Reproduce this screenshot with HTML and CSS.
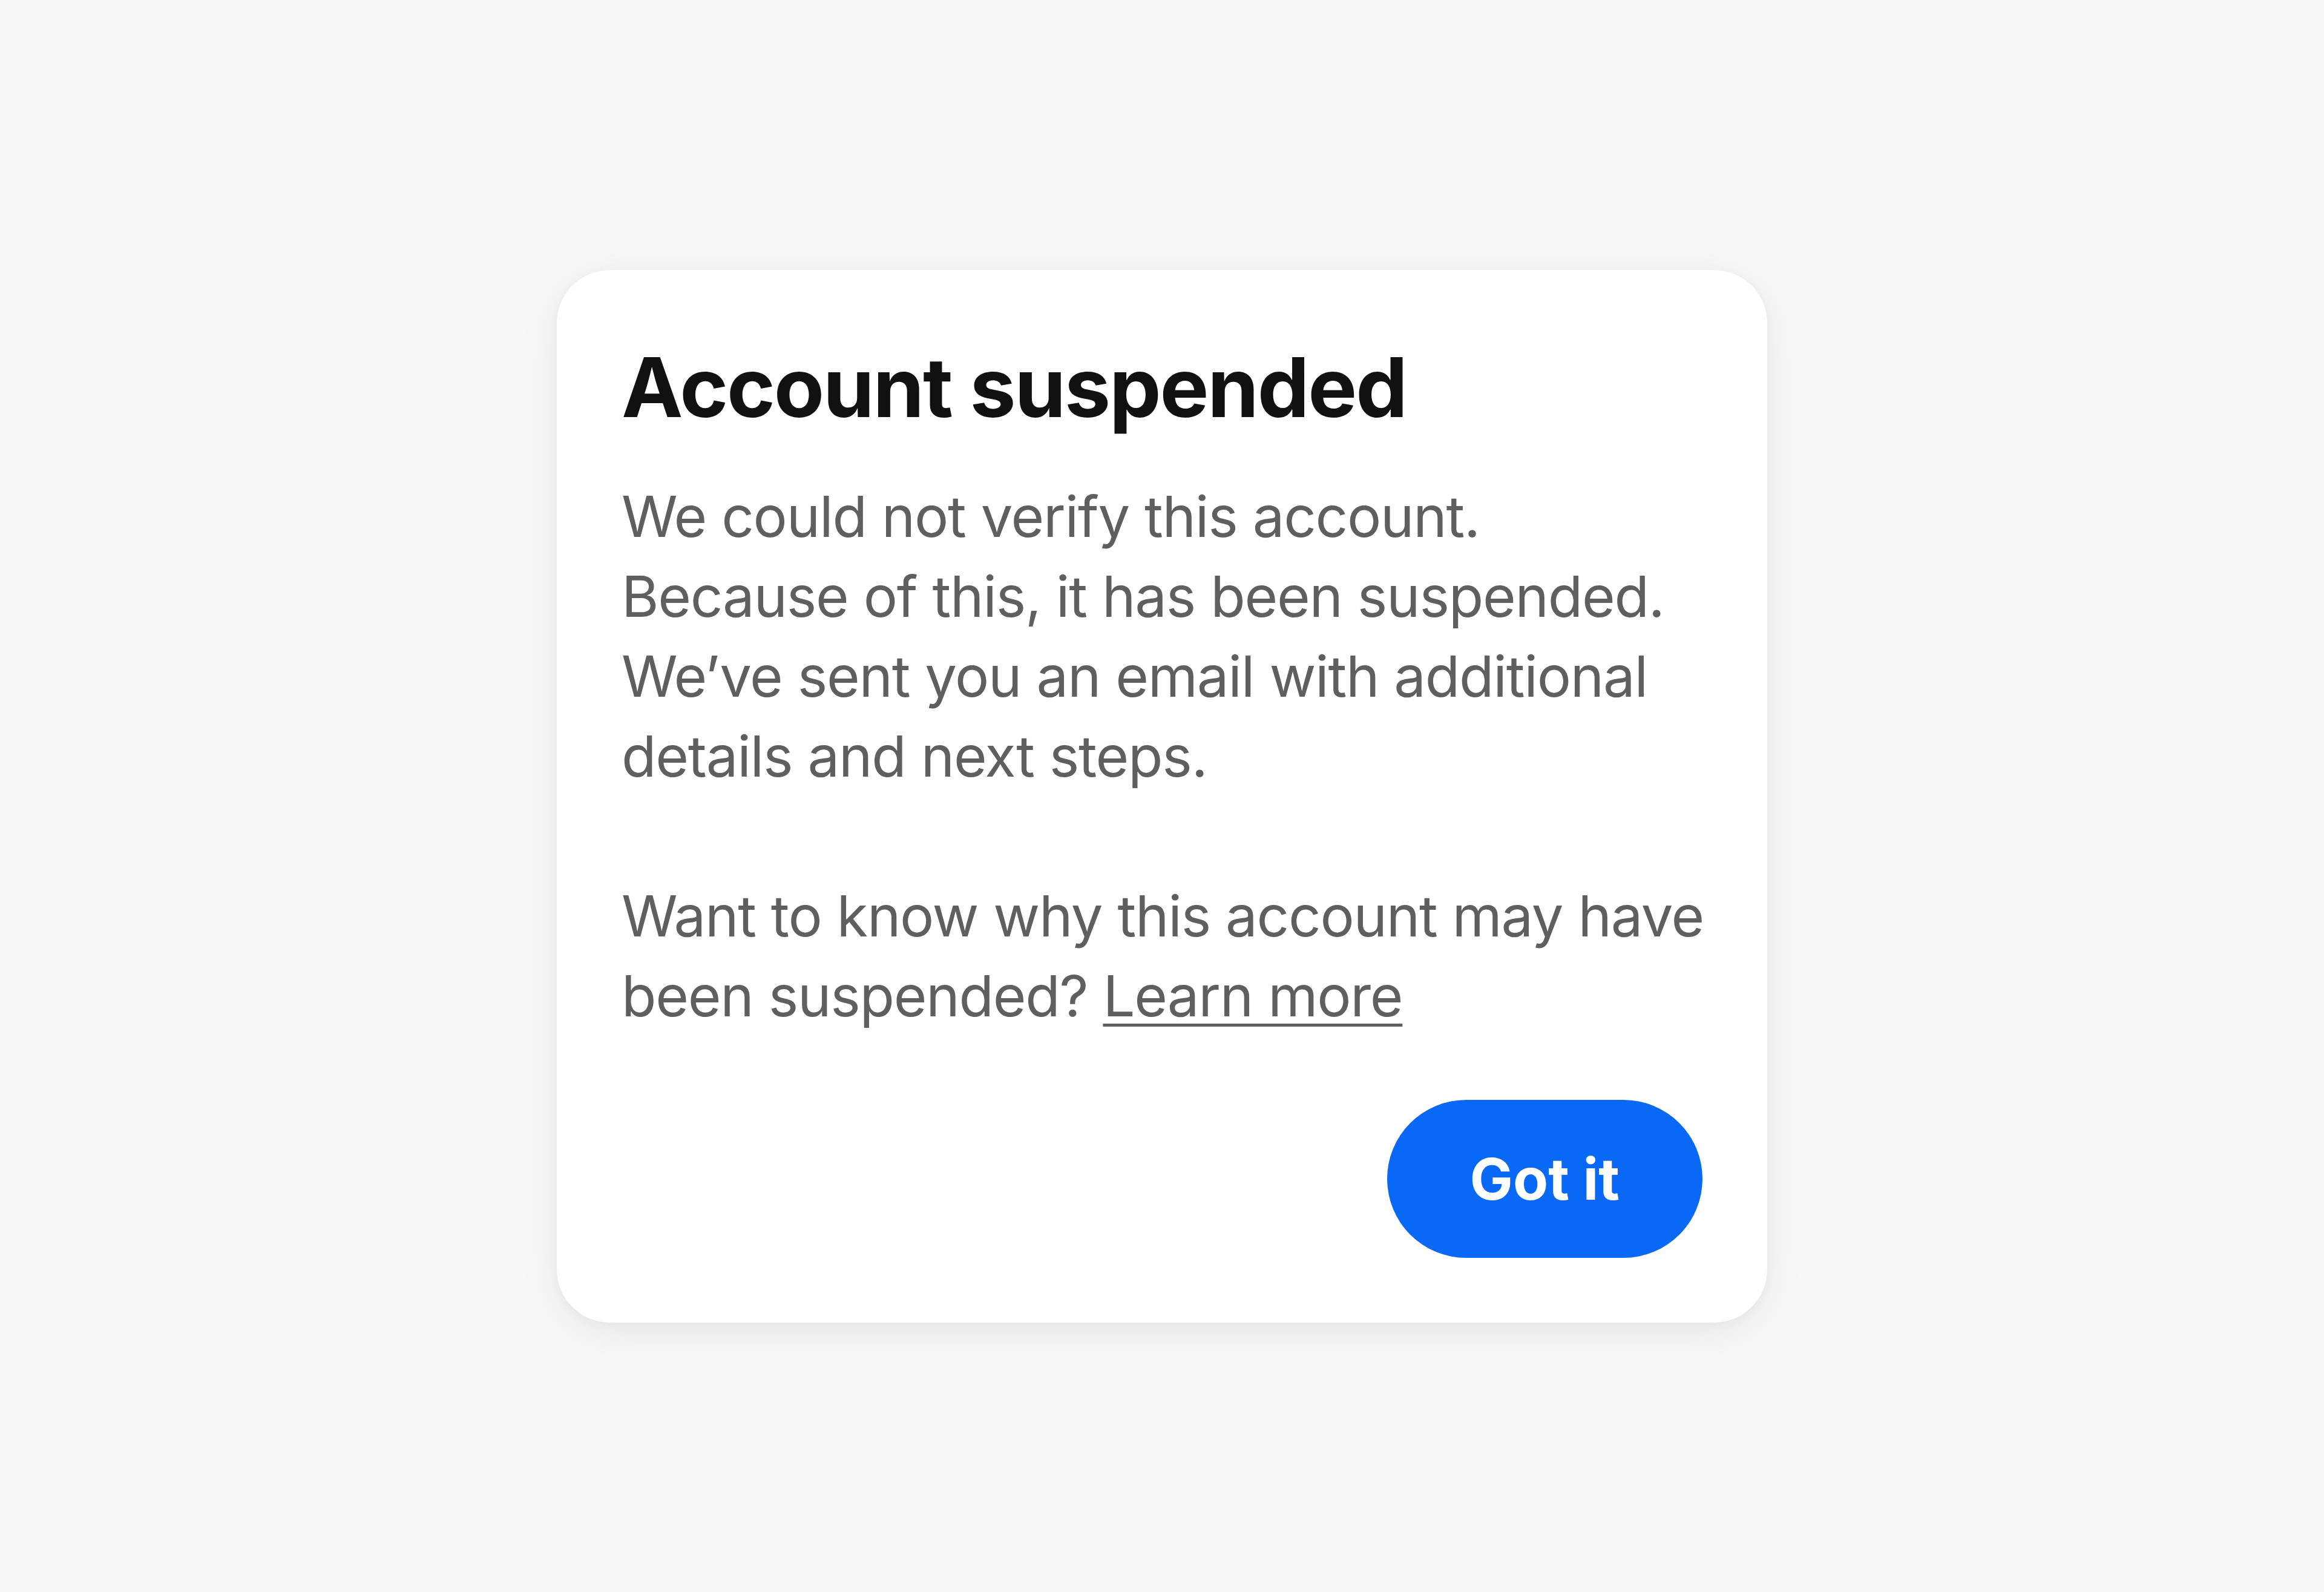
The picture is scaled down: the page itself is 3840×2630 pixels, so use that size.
FILE: index.html
```html
<!DOCTYPE html>
<html lang="en">
<head>
    <meta charset="UTF-8">
    <meta name="viewport" content="width=device-width, initial-scale=1.0">
    <title>Account suspended</title>
    <link rel="stylesheet" href="styles.css">
</head>
<body>
    <div class="dialog" role="dialog" aria-labelledby="dialog-title">
        <h1 class="dialog-title" id="dialog-title">Account suspended</h1>
        <p class="dialog-text">
            We could not verify this account.<br>
            Because of this, it has been suspended.<br>
            We’ve sent you an email with additional<br>
            details and next steps.
        </p>
        <p class="dialog-text dialog-text-gap">
            Want to know why this account may have<br>
            been suspended? <a href="#" class="dialog-link">Learn more</a>
        </p>
        <div class="dialog-actions">
            <button class="btn-primary" type="button">Got it</button>
        </div>
    </div>
</body>
</html>
```

FILE: styles.css
```css
:root {
    --bg-page: #f7f7f7;
    --bg-card: #ffffff;
    --text-strong: #111111;
    --text-muted: #5f5f5f;
    --accent: #0968f6;
}

* {
    margin: 0;
    padding: 0;
    box-sizing: border-box;
    font-family: 'Inter', 'Noto Sans', system-ui, sans-serif;
}

body {
    background-color: var(--bg-page);
    min-height: 100vh;
    display: flex;
    align-items: center;
    justify-content: center;
}

.dialog {
    width: 2000px;
    background: var(--bg-card);
    border-radius: 88px;
    padding: 112px 107px 107px;
    box-shadow: 0 14px 70px rgba(0, 0, 0, 0.07), 0 4px 16px rgba(0, 0, 0, 0.03);
}

.dialog-title {
    font-size: 136px;
    line-height: 163px;
    font-weight: 700;
    color: var(--text-strong);
    letter-spacing: -2.2px;
    margin-bottom: 66px;
}

/* lines are broken by hand, so keep them from wrapping again */
.dialog-text {
    font-size: 94px;
    line-height: 132px;
    color: var(--text-muted);
    letter-spacing: -1.3px;
    white-space: nowrap;
}

.dialog-text-gap {
    margin-top: 132px;
}

.dialog-link {
    color: inherit;
    text-decoration: underline;
    text-decoration-thickness: 5px;
    text-underline-offset: 12px;
}

.dialog-actions {
    display: flex;
    justify-content: flex-end;
    margin-top: 106px;
}

.btn-primary {
    background: var(--accent);
    color: #ffffff;
    border: none;
    height: 261px;
    padding: 0 137px;
    border-radius: 999px;
    font-size: 95px;
    font-weight: 700;
    cursor: pointer;
}
```
